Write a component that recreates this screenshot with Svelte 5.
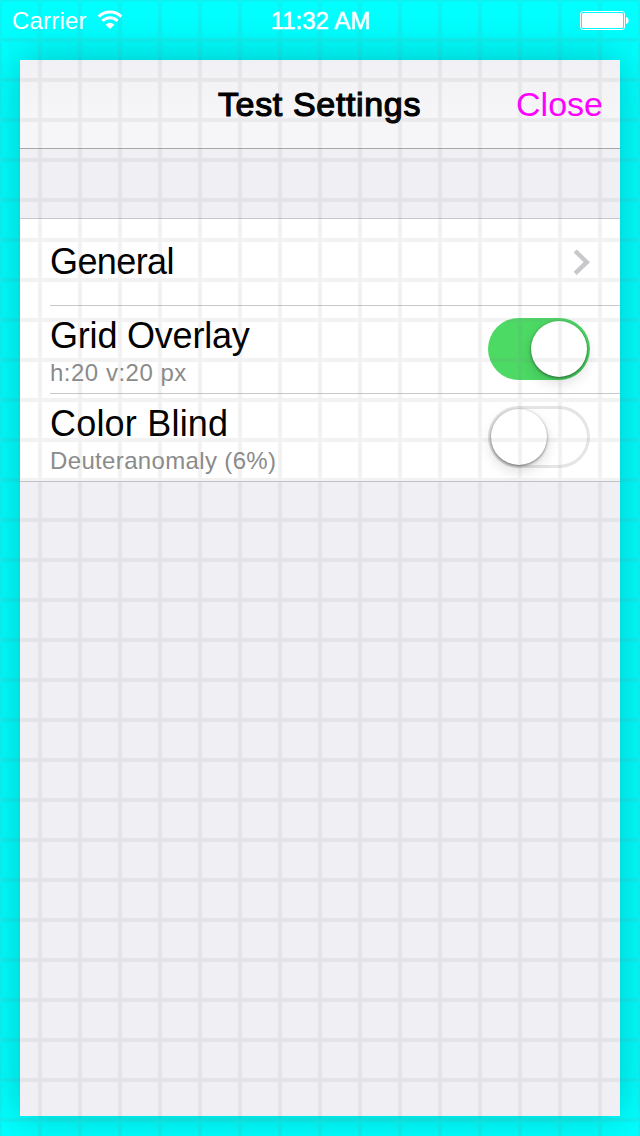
<script>
  let gridOn = $state(true);
  let blindOn = $state(false);
</script>

{#snippet toggle(on, label, flip)}
  <button class="toggle" class:on role="switch" aria-checked={on} aria-label={label} onclick={flip}>
    <span class="knob"></span>
  </button>
{/snippet}

<div class="screen">
  <header class="status">
    <div class="left">
      <span class="carrier">Carrier</span>
      <svg width="26" height="20" viewBox="0 0 26 20">
        <path d="M1.7 6.6 A16 16 0 0 1 24.3 6.6" fill="none" stroke="#fff" stroke-width="2.9" />
        <path d="M5.4 10.9 A10.8 10.8 0 0 1 20.6 10.9" fill="none" stroke="#fff" stroke-width="2.9" />
        <path d="M8.6 14.7 Q13 11 17.4 14.7 L13 19 Z" fill="#fff" />
      </svg>
    </div>
    <span class="time">11:32 AM</span>
    <svg class="battery" width="49" height="19" viewBox="0 0 49 19">
      <rect x=".5" y=".5" width="44" height="18" rx="2.5" fill="none" stroke="#fff" />
      <rect x="2" y="2" width="41" height="15" rx="1.5" fill="#fff" />
      <path d="M46 6 C49.5 6.5 49.5 12.5 46 13 Z" fill="#fff" />
    </svg>
  </header>

  <main class="panel">
    <nav>
      <h1>Test Settings</h1>
      <button class="close">Close</button>
    </nav>
    <section class="table">
      <div class="row">
        <div class="label"><span class="title general-title">General</span></div>
        <svg class="chevron" width="17" height="26" viewBox="0 0 17 26">
          <path d="M2.2 2 L13.8 13.2 L2.2 24.4" fill="none" stroke="#c7c7cc" stroke-width="4.4" />
        </svg>
      </div>
      <div class="row">
        <div class="label double">
          <span class="title grid-title">Grid Overlay</span>
          <span class="detail px">h:20 v:20 px</span>
        </div>
        {@render toggle(gridOn, 'Grid Overlay', () => (gridOn = !gridOn))}
      </div>
      <div class="row">
        <div class="label double">
          <span class="title blind-title">Color Blind</span>
          <span class="detail">Deuteranomaly (6%)</span>
        </div>
        {@render toggle(blindOn, 'Color Blind', () => (blindOn = !blindOn))}
      </div>
    </section>
  </main>

  {#if gridOn}
    <svg class="overlay" width="640" height="1136">
      <defs>
        <pattern id="lines" x="-2" y="-2" width="40" height="40" patternUnits="userSpaceOnUse">
          <path d="M0 0 H40 V4 H4 V40 H0 Z" fill="#808080" fill-opacity=".1" />
        </pattern>
      </defs>
      <rect width="640" height="1136" fill="url(#lines)" />
    </svg>
  {/if}
</div>

<style>
  :global(body) {
    margin: 0;
    overflow: hidden;
  }
  .screen {
    position: relative;
    box-sizing: border-box;
    width: 640px;
    height: 1136px;
    padding: 0 20px 20px;
    display: flex;
    flex-direction: column;
    overflow: hidden;
    background: #0ff;
    font-family: 'Liberation Sans', Arial, sans-serif;
  }
  button {
    border: 0;
    background: none;
    padding: 0;
    font: inherit;
  }
  .status {
    position: relative;
    z-index: 3;
    display: grid;
    grid-template-columns: 1fr auto 1fr;
    align-items: center;
    height: 40px;
    margin: 0 -9px 20px -8px;
    color: #fff;
    font-size: 24px;
  }
  .left {
    display: flex;
    align-items: center;
    gap: 10px;
  }
  .carrier {
    padding-top: 2px;
    letter-spacing: 0.2px;
  }
  .time {
    padding-top: 2px;
    -webkit-text-stroke: 0.5px #fff;
  }
  .battery {
    justify-self: end;
  }
  .panel {
    flex: 1;
    background: #efeff4;
    box-shadow: 0 -2px 40px rgba(0, 0, 0, 0.24);
  }
  nav {
    box-sizing: border-box;
    height: 89px;
    display: grid;
    grid-template-columns: 1fr auto 1fr;
    align-items: center;
    padding: 0 17px 0 16px;
    border-bottom: 1px solid #a7a7aa;
    background: linear-gradient(#f1f1f5, #f6f6f8 60%);
  }
  h1 {
    grid-column: 2;
    margin: 0;
    font-size: 34px;
    font-weight: 400;
    letter-spacing: 0.65px;
    -webkit-text-stroke: 1.2px #000;
  }
  .close {
    justify-self: end;
    color: #f0f;
    font-size: 34px;
  }
  .table {
    margin-top: 69px;
    border-top: 1px solid #c8c7cc;
    border-bottom: 1px solid #c8c7cc;
    background: #fff;
  }
  .row {
    box-sizing: border-box;
    height: 88px;
    margin-left: 30px;
    padding-right: 30px;
    display: flex;
    align-items: center;
    justify-content: space-between;
    border-bottom: 1px solid #c8c7cc;
  }
  .row:first-child,
  .row:last-child {
    height: 87px;
  }
  .row:last-child {
    border-bottom: 0;
  }
  .label {
    display: flex;
    flex-direction: column;
  }
  .label.double {
    padding-top: 6px;
  }
  .title {
    font-size: 36px;
    line-height: 40px;
    white-space: nowrap;
  }
  .general-title {
    letter-spacing: -0.6px;
  }
  .grid-title {
    letter-spacing: -0.2px;
  }
  .blind-title {
    letter-spacing: 0.2px;
  }
  .detail {
    color: #8b8b8b;
    font-size: 24px;
    line-height: 33px;
    letter-spacing: 0.35px;
    white-space: nowrap;
  }
  .px {
    letter-spacing: 0.5px;
  }
  .toggle {
    display: flex;
    box-sizing: border-box;
    width: 102px;
    height: 62px;
    margin-bottom: 2px;
    padding: 3px;
    border-radius: 31px;
    box-shadow: inset 0 0 0 3px #e5e5e5;
  }
  .toggle.on {
    justify-content: flex-end;
    background: #4cd964;
    box-shadow: none;
  }
  .knob {
    width: 56px;
    height: 56px;
    border-radius: 50%;
    background: #fff;
    box-shadow: 0 1px 3px rgba(0, 0, 0, 0.5), 0 6px 14px rgba(0, 0, 0, 0.14);
  }
  .overlay {
    position: absolute;
    inset: 0;
    z-index: 1;
    pointer-events: none;
  }
</style>
